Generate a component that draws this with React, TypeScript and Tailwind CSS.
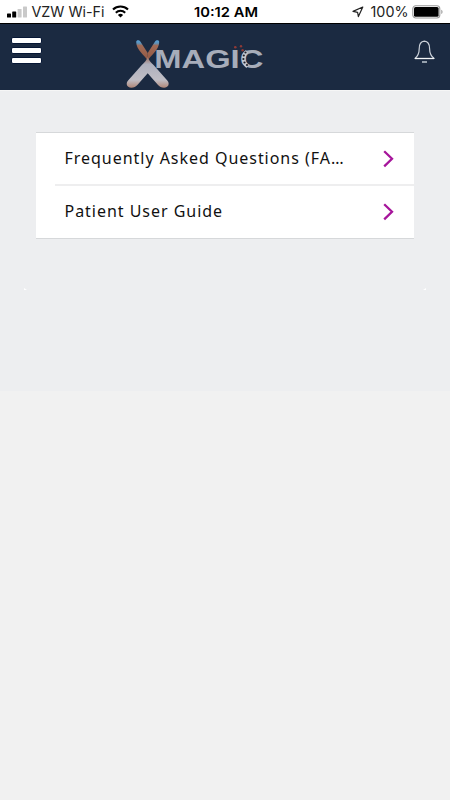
import React from 'react';

interface GuideLink {
  id: string;
  label: string;
}

const links: GuideLink[] = [
  { id: 'faq', label: 'Frequently Asked Questions (FA…' },
  { id: 'guide', label: 'Patient User Guide' },
];

const StatusBar: React.FC = () => (
  <div className="grid h-6 grid-cols-[1fr_auto_1fr] items-center border-b border-black bg-white font-['Inter',sans-serif] text-black">
    <div className="flex items-center pl-[7px]">
      <svg width="21" height="12" viewBox="0 0 21 12" className="shrink-0">
        <rect x="0" y="7.5" width="4" height="4" rx="0.6" fill="#000" />
        <rect x="5.2" y="5.5" width="4" height="6" rx="0.6" fill="#000" />
        <rect x="10.6" y="3" width="4" height="8.5" rx="0.6" fill="#c9c9c9" />
        <rect x="16" y="0.5" width="4" height="11" rx="0.6" fill="#c9c9c9" />
      </svg>
      <svg width="77" height="20" className="shrink-0">
        <text x="3.5" y="15" fontSize="14" textLength="73" lengthAdjust="spacingAndGlyphs" className="fill-[#222]">VZW Wi-Fi</text>
      </svg>
      <svg width="17" height="13" viewBox="0 0 17 13" className="ml-[7px] shrink-0" fill="none" stroke="#000">
        <path d="M1 4.6a10.8 10.8 0 0 1 15 0" strokeWidth="2.1" />
        <path d="M3.8 7.7a6.8 6.8 0 0 1 9.4 0" strokeWidth="2" />
        <path d="M8.5 12.5 5.9 9.9a3.8 3.8 0 0 1 5.2 0z" fill="#000" stroke="none" />
      </svg>
    </div>
    <svg width="66" height="20">
      <text x="2" y="15" fontSize="13.5" fontWeight="600" textLength="64" lengthAdjust="spacingAndGlyphs">10:12 AM</text>
    </svg>
    <div className="flex items-center justify-end pr-[6px]">
      <svg width="12" height="12" viewBox="0 0 12 12" fill="none" stroke="#222" strokeWidth="1.2" strokeLinejoin="round">
        <path d="M10.8 1 6.4 10.6 5.6 6.3 1 5.4z" />
      </svg>
      <svg width="44" height="20" className="ml-1">
        <text x="2.5" y="15" fontSize="14" textLength="38" lengthAdjust="spacingAndGlyphs" className="fill-[#222]">100%</text>
      </svg>
      <svg width="32" height="14" viewBox="0 0 32 14">
        <rect x="0.8" y="0.8" width="27" height="12.2" rx="3" fill="none" stroke="#999" strokeWidth="1.1" />
        <rect x="2" y="2" width="24.6" height="9.8" rx="1.6" fill="#000" />
        <path d="M29.3 4.8c1.6.5 1.6 3.7 0 4.2z" fill="#999" />
      </svg>
    </div>
  </div>
);

const Logo: React.FC = () => (
  <svg width="144" height="54" viewBox="120 36 144 54" aria-label="Xmagic">
    <defs>
      <linearGradient id="arm" x1="0" y1="0" x2="0" y2="1">
        <stop offset="0" stopColor="#9d6a58" />
        <stop offset="0.25" stopColor="#aeb0bd" />
        <stop offset="0.75" stopColor="#c0bec5" />
        <stop offset="1" stopColor="#b08778" />
      </linearGradient>
      <linearGradient id="tip" x1="0" y1="0" x2="0" y2="1">
        <stop offset="0" stopColor="#5aa0d6" />
        <stop offset="0.14" stopColor="#5a93bd" />
        <stop offset="0.26" stopColor="#a06b57" />
        <stop offset="1" stopColor="#945843" />
      </linearGradient>
    </defs>
    <path d="M136.2 42c0-2.200 2.900-2.300 4.300-.3l7.200 11.300v7.500c-3-5.200-11.500-10.700-11.500-18.500z" fill="url(#tip)" />
    <path d="M159.200 42c0-2.200-2.900-2.300-4.300-.3l-7.200 11.300v7.500c3-5.200 11.500-10.700 11.500-18.500z" fill="url(#tip)" />
    <path d="M147.700 56.500C148.400 60 151 62.500 153.800 65.300L167.300 80.500C170.300 84 168 87.800 164 87.700C161.500 87.600 159.500 86.800 157.800 84.800L147.700 73.300L137.600 84.800C135.900 86.800 133.900 87.600 131.400 87.700C127.400 87.800 125.100 84 128.100 80.500L141.600 65.300C144.400 62.500 147 60 147.700 56.500Z" fill="url(#arm)" />
    <text y="67.7" x="154.300" fontSize="25" fontWeight="700" textLength="109" lengthAdjust="spacingAndGlyphs" fill="#a7adba" className="font-['Liberation_Sans',sans-serif]">
      MAGIC
    </text>
    <g fill="#8e3936">
      <circle cx="235.3" cy="47.3" r="1.3" />
      <circle cx="241" cy="46.3" r="1.2" />
      <circle cx="242.6" cy="50.2" r="1.2" />
    </g>
    <path d="M247 51.500c-4.500 3-4.700 11 .5 15" fill="none" stroke="#c3c6cf" strokeWidth="3.600" />
    <g fill="#20202a">
      <circle cx="245.500" cy="52.500" r="1.100" />
      <circle cx="243.800" cy="55.500" r="1.100" />
      <circle cx="243.400" cy="59" r="1.100" />
      <circle cx="244.500" cy="62.500" r="1.100" />
      <circle cx="247" cy="65" r="1.100" />
    </g>
  </svg>
);

const Header: React.FC = () => (
  <header className="flex h-[66px] items-start bg-[#1b2a41] pl-[11px] pr-[14px]">
    <button type="button" aria-label="Menu" className="mt-[13px] flex flex-col gap-[3px]">
      <span className="h-[7px] w-[31px] rounded-[2px] border border-[#071735] bg-white" />
      <span className="h-[7px] w-[31px] rounded-[2px] border border-[#071735] bg-white" />
      <span className="h-[7px] w-[31px] rounded-[2px] border border-[#071735] bg-white" />
    </button>
    <div className="ml-[78px] mt-3">
      <Logo />
    </div>
    <button type="button" aria-label="Notifications" className="ml-auto mt-4">
      <svg width="22" height="24" viewBox="0 0 22 24" fill="none" stroke="#ccd2da" strokeWidth="1.2" strokeLinejoin="round">
        <path d="M1 18.500c3.500-3 4.200-5.500 4.200-9.800 0-4.900 2-7.200 5.200-7.500 3.200.3 5.200 2.600 5.200 7.500 0 4.300.7 6.800 4.500 9.800z" />
        <path d="M1 18.500h19.100" stroke="#f3f5f7" strokeWidth="1.3" />
        <path d="M8 22h5" stroke="#a5afba" strokeWidth="1.8" />
      </svg>
    </button>
  </header>
);

const LinkRow: React.FC<{ link: GuideLink }> = ({ link }) => (
  <li className="ml-[19px] flex h-[51px] items-center justify-between pl-[9.5px] pr-5">
    <span className="whitespace-nowrap pb-[2px] font-['Noto_Sans',sans-serif] text-base tracking-[0.97px] text-[#111]">{link.label}</span>
    <svg width="11" height="18" viewBox="0 0 11 18" fill="none" stroke="#a6159b" strokeWidth="2.3" className="shrink-0">
      <path d="M1.200 1.200 9 8.800 1.200 16.300" />
    </svg>
  </li>
);

const App: React.FC = () => (
  <div className="min-h-screen w-full bg-[#f1f1f1]">
    <StatusBar />
    <Header />
    <main className="h-[301px] border-t border-[#f6f6f6] bg-[#edeef0] px-9 pt-[41px]">
      <ul className="border-y border-[#d6d8da] bg-white pb-px">
        <LinkRow link={links[0]} />
        <li className="ml-[19px] h-[2px] bg-[#eeeeef]" />
        <LinkRow link={links[1]} />
      </ul>
      <div className="-mx-3 mt-[49px] flex justify-between">
        <svg width="3" height="3" fill="#fff"><path d="M0 0v2h3z" /></svg>
        <svg width="3" height="3" fill="#fff"><path d="M3 0v2H0z" /></svg>
      </div>
    </main>
  </div>
);

export default App;
